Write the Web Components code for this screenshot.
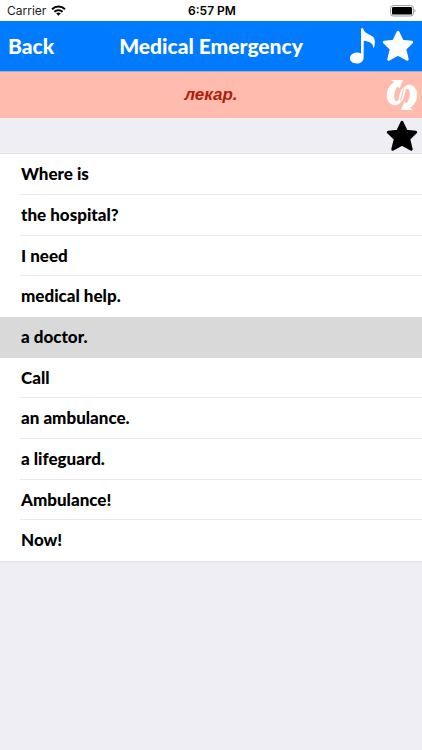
<!DOCTYPE html>
<html lang="en">
<head>
<meta charset="utf-8">
<meta name="viewport" content="width=device-width, initial-scale=1">
<title>Medical Emergency</title>
<style>
html, body { margin: 0; min-height: 100%; background: #efeef4; }
body { font-family: Lato, "Open Sans", sans-serif; color: #000; }
</style>
</head>
<body>
<phrase-app></phrase-app>
<script>
const define = (name, html) => {
  const template = document.createElement('template');
  template.innerHTML = html;
  customElements.define(name, class extends HTMLElement {
    constructor() {
      super();
      this.attachShadow({ mode: 'open' }).append(template.content.cloneNode(true));
    }
  });
};
const star = '<svg width="32" height="32" viewBox="0 0 32 32" aria-hidden="true"><path fill="currentColor" stroke="currentColor" stroke-width="3" stroke-linejoin="round" d="M16 2.3 20.2 11.2 29.7 12.2 22.7 19 25.2 29.2 16 24.3 6.8 29.2 9.3 19 2.3 12.2 11.8 11.2Z"/></svg>';
const halfLoop = 'M5 1H17L13.5 9.5 11.5 7.5C8 12 7.2 19 9.5 22Q11 23 12.2 21C13.8 16 14 11 17.6 8.2L17.8 9.5C16.2 13 15.8 20 13.5 24.5C9 28.5 3 25.5 1.3 20C-.5 14 2.4 6.5 8 3.4Z';

define('status-bar', `
<style>
:host { display: grid; grid-template-columns: 1fr auto 1fr; align-items: center; height: 21px; padding: 0 5px 0 7px; background: #fff; font-family: Inter, sans-serif; font-size: 12px; line-height: 20px; }
.left { display: flex; align-items: center; gap: 5px; color: #222; }
.time { font-weight: 600; }
.battery { justify-self: end; }
svg { display: block; }
</style>
<div class="left"><span>Carrier</span>
<svg width="15" height="11" viewBox="0 0 15 11" aria-hidden="true"><g fill="none" stroke="#000" stroke-width="2"><path d="M1 4.2C4.7.7 10.3.7 14 4.2"/><path d="M3.4 6.8C5.8 4.6 9.2 4.6 11.6 6.8"/></g><path d="M5.2 8.4Q7.5 6.5 9.8 8.4L7.5 10.8Z"/></svg></div>
<span class="time">6:57 PM</span>
<svg class="battery" width="27" height="12" viewBox="0 0 27 12" aria-hidden="true"><rect x=".6" y=".6" width="22.8" height="10.4" rx="2.6" fill="#fff" stroke="#999"/><rect x="2" y="2" width="20" height="7.6" rx="1.2"/><path fill="#999" d="M24.5 4Q26.5 5.8 24.5 7.6Z"/></svg>`);

define('nav-bar', `
<style>
:host { display: grid; grid-template-columns: 1fr auto 1fr; align-items: center; height: 50px; padding: 0 8px; background: #007aff; border-bottom: 1px solid #a5a9d4; color: #fff; font-size: 21px; font-weight: 900; line-height: 24px; }
button { font: inherit; color: inherit; background: none; border: 0; padding: 0; }
h1 { font: inherit; margin: 0; }
.back { justify-self: start; }
.tools { justify-self: end; display: flex; align-items: center; gap: 6px; }
svg { display: block; }
</style>
<button class="back">Back</button>
<h1><slot></slot></h1>
<div class="tools">
<button aria-label="Play sound"><svg width="27" height="38" viewBox="0 0 27 38" aria-hidden="true"><path fill="#fff" d="M12 2.5Q12 1 13.2 1Q14.4 1 14.6 2.7C15.2 5 18 6.6 21.5 8.3C25 10 26 12 25.9 15.5Q25.8 19.5 24.5 21.5Q24 16 19.5 14.7Q16.5 13.7 14.8 13.7L14.6 31C14.5 34.5 11.5 36.5 7.8 36.5C3.8 36.5 1 34.5 1 31.3C1 27.8 4.2 25.5 8 25.5Q10.4 25.5 12 26.6Z"/></svg></button>
<button aria-label="Favorites">${star}</button>
</div>`);

define('translation-bar', `
<style>
:host { display: grid; grid-template-columns: 1fr auto 1fr; align-items: center; height: 46px; padding: 0 4px; background: #ffbcae; }
p { grid-column: 2; margin: 0; font: italic bold 17px/22px "Liberation Sans", Arial, sans-serif; color: #b01b0a; }
button { justify-self: end; border: 0; padding: 0; background: none; }
svg { display: block; }
</style>
<p lang="mk"><slot></slot></p>
<button aria-label="Repeat"><svg width="32" height="32" viewBox="0 0 32 32" aria-hidden="true"><g fill="#fff"><path d="${halfLoop}"/><path transform="rotate(180 16 16)" d="${halfLoop}"/></g><path d="M17.6 10.5Q16.5 12.5 16 16T14.4 21.5" fill="none" stroke="#ffbcae"/></svg></button>`);

define('favorite-bar', `
<style>
:host { display: flex; justify-content: flex-end; align-items: center; height: 35px; padding: 0 4px; border-bottom: 1px solid #e2e1e6; color: #000; }
button { border: 0; padding: 0; background: none; color: inherit; }
svg { display: block; }
</style>
<button aria-label="Add to favorites">${star}</button>`);

define('phrase-row', `
<style>
:host { display: flex; box-sizing: border-box; height: 41px; padding-left: 20px; background: #fff; }
button { flex: 1; border: 0; border-bottom: 1px solid #e9e9eb; padding: 0 1px; background: none; color: #000; text-align: left; font-family: inherit; font-size: 17px; font-weight: 900; line-height: 20px; }
:host([selected]) { background: #d9d9d9; }
:host([selected]) button, :host([flush]) button { border-color: transparent; }
</style>
<button><slot></slot></button>`);

define('phrase-list', `
<style>
:host { display: block; border-bottom: 1px solid #e0e0e4; }
::slotted(:nth-child(3n)) { height: 40px; }
</style>
<slot></slot>`);

define('phrase-app', `
<style>:host { display: block; }</style>
<status-bar></status-bar>
<nav-bar>Medical Emergency</nav-bar>
<translation-bar>лекар.</translation-bar>
<favorite-bar></favorite-bar>
<phrase-list>
<phrase-row>Where is</phrase-row>
<phrase-row>the hospital?</phrase-row>
<phrase-row>I need</phrase-row>
<phrase-row flush>medical help.</phrase-row>
<phrase-row selected>a doctor.</phrase-row>
<phrase-row>Call</phrase-row>
<phrase-row>an ambulance.</phrase-row>
<phrase-row>a lifeguard.</phrase-row>
<phrase-row>Ambulance!</phrase-row>
<phrase-row flush>Now!</phrase-row>
</phrase-list>`);
</script>
</body>
</html>
